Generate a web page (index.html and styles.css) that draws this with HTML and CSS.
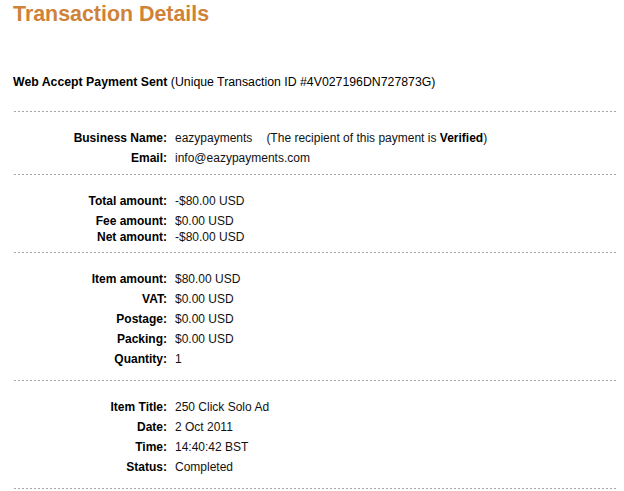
FILE: index.html
```html
<!DOCTYPE html>
<html lang="en">
<head>
<meta charset="utf-8">
<title>Transaction Details</title>
<link rel="stylesheet" href="styles.css">
</head>
<body>
<div class="page">
  <h1 class="title">Transaction Details</h1>
  <p class="summary"><b>Web Accept Payment Sent</b> (Unique Transaction ID #4V027196DN727873G)</p>

  <div class="divider"></div>
  <div class="section section-tight">
    <div class="row"><span class="label">Business Name:</span><span class="value">eazypayments<span class="note">(The recipient of this payment is <b>Verified</b>)</span></span></div>
    <div class="row"><span class="label">Email:</span><span class="value">info@eazypayments.com</span></div>
  </div>

  <div class="divider"></div>
  <div class="section section-tight">
    <div class="row"><span class="label">Total amount:</span><span class="value">-$80.00 USD</span></div>
    <div class="row row-compact"><span class="label">Fee amount:<br>Net amount:</span><span class="value">$0.00 USD<br>-$80.00 USD</span></div>
  </div>

  <div class="divider"></div>
  <div class="section">
    <div class="row"><span class="label">Item amount:</span><span class="value">$80.00 USD</span></div>
    <div class="row"><span class="label">VAT:</span><span class="value">$0.00 USD</span></div>
    <div class="row"><span class="label">Postage:</span><span class="value">$0.00 USD</span></div>
    <div class="row"><span class="label">Packing:</span><span class="value">$0.00 USD</span></div>
    <div class="row"><span class="label">Quantity:</span><span class="value">1</span></div>
  </div>

  <div class="divider"></div>
  <div class="section">
    <div class="row"><span class="label">Item Title:</span><span class="value">250 Click Solo Ad</span></div>
    <div class="row"><span class="label">Date:</span><span class="value">2 Oct 2011</span></div>
    <div class="row"><span class="label">Time:</span><span class="value">14:40:42 BST</span></div>
    <div class="row"><span class="label">Status:</span><span class="value">Completed</span></div>
  </div>
  <div class="divider"></div>
</div>
</body>
</html>
```
FILE: styles.css
```css
html, body {
  margin: 0;
  padding: 0;
  background: #ffffff;
}

body {
  font-family: "Liberation Sans", Arial, Helvetica, sans-serif;
  font-size: 12px;
  color: #111;
}

.page {
  padding: 2px 8px 0 13px;
}

.title {
  margin: 0;
  font-size: 21.4px;
  line-height: 24px;
  font-weight: bold;
  color: #cf8238;
}

.summary {
  margin: 46px 0 0;
  font-size: 12.3px;
  line-height: 20px;
  color: #000;
}

.summary b {
  color: #000;
}

.divider {
  height: 1px;
  margin: 19px 0 0 1px;
  background-image: linear-gradient(to right, #a6a6a6 0 2px, transparent 2px 4px);
  background-size: 4px 1px;
  background-repeat: repeat-x;
}

.section + .divider {
  margin-top: 0;
}

.section {
  padding: 16px 0 11px;
}

.section-tight {
  padding-bottom: 6px;
}

.row {
  display: grid;
  grid-template-columns: 154px 1fr;
  column-gap: 8px;
  line-height: 20px;
}

.row-compact {
  line-height: 16px;
  padding: 2px 0 1px;
}

.label {
  text-align: right;
  font-weight: bold;
  color: #000;
}

.value {
  color: #111;
}

.note {
  margin-left: 14px;
}

.note b {
  color: #000;
}
```
